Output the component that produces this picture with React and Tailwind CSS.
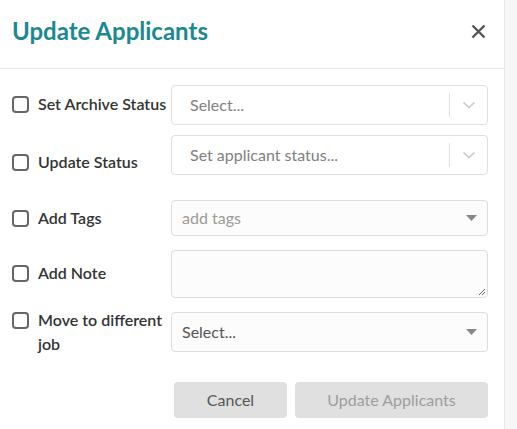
import React from "react";

const font = { fontFamily: "Lato, 'Open Sans', 'Liberation Sans', sans-serif" };

function Checkbox() {
  return <span className="inline-block w-[17px] h-[17px] shrink-0 rounded-[4px] border-2 border-[#666] bg-white" />;
}

function ReactSelect({ placeholder }) {
  return (
    <div className="h-[40px] w-full rounded-[4px] border border-[#e0e0e0] bg-white flex items-center">
      <span className="flex-1 pl-[18px] text-[16px] text-[#808080]">{placeholder}</span>
      <span className="w-px h-[24px] bg-[#e0e0e0]" />
      <span className="w-[37px] flex items-center justify-center">
        <svg width="14" height="8" viewBox="0 0 14 8" fill="none">
          <path d="M1.5 1.5 L7 6.5 L12.5 1.5" stroke="#c8c8c8" strokeWidth="1.6" />
        </svg>
      </span>
    </div>
  );
}

function NativeSelect({ placeholder, light, h }) {
  return (
    <div className={`${h} w-full rounded-[4px] border border-[#ddd] bg-[#fcfcfc] flex items-center`}>
      <span className={`flex-1 pl-[10px] text-[16px] ${light ? "text-[#9a9a9a]" : "text-[#555]"}`}>{placeholder}</span>
      <svg className="mr-[10px]" width="11" height="6" viewBox="0 0 11 6">
        <path d="M0 0 H11 L5.5 6 Z" fill="#888" />
      </svg>
    </div>
  );
}

function Label({ children, className = "" }) {
  return (
    <div className={`flex items-start gap-[9px] text-[16px] font-semibold text-[#333] leading-[24px] ${className}`}>
      <span className="mt-[3px]"><Checkbox /></span>
      <span>{children}</span>
    </div>
  );
}

export default function App() {
  return (
    <div className="flex w-[517px] h-[429px] bg-white" style={font}>
      <div className="w-[505px] h-full border-r border-[#e8e8e8] bg-white flex flex-col">
        <div className="h-[69px] border-b border-[#e8e8e8] flex items-center justify-between pl-[12px] pr-[18px] pb-[6px]">
          <h1 className="text-[24px] font-bold text-[#1b8892]">Update Applicants</h1>
          <svg width="15" height="15" viewBox="0 0 15 15">
            <path d="M1.5 1.5 L13.5 13.5 M13.5 1.5 L1.5 13.5" stroke="#555" strokeWidth="2.4" />
          </svg>
        </div>
        <div className="pl-[12px] pr-[16px] pt-[16px] flex flex-col">
          <div className="flex items-center h-[40px]">
            <Label className="w-[159px]">Set Archive Status</Label>
            <div className="flex-1"><ReactSelect placeholder="Select..." /></div>
          </div>
          <div className="flex items-end h-[40px] mt-[10px]">
            <Label className="w-[159px] mb-[-2px]">Update Status</Label>
            <div className="flex-1"><ReactSelect placeholder="Set applicant status..." /></div>
          </div>
          <div className="flex items-center h-[36px] mt-[25px]">
            <Label className="w-[159px] mt-[2px]">Add Tags</Label>
            <div className="flex-1"><NativeSelect placeholder="add tags" light h="h-[36px]" /></div>
          </div>
          <div className="flex items-center h-[48px] mt-[14px]">
            <Label className="w-[159px]">Add Note</Label>
            <div className="flex-1 relative">
              <div className="h-[48px] w-full rounded-[4px] border border-[#ddd] bg-[#fcfcfc]" />
              <svg className="absolute right-[2px] bottom-[2px]" width="8" height="8" viewBox="0 0 8 8">
                <path d="M7 1 L1 7 M7 4 L4 7" stroke="#666" strokeWidth="1" />
              </svg>
            </div>
          </div>
          <div className="flex items-center h-[40px] mt-[14px]">
            <Label className="w-[159px] mt-[0px]">Move to different job</Label>
            <div className="flex-1"><NativeSelect placeholder="Select..." h="h-[40px]" /></div>
          </div>
          <div className="flex justify-end gap-[8px] mt-[30px]">
            <button className="w-[113px] h-[36px] rounded-[4px] bg-[#e0e0e0] text-[16px] text-[#555]">Cancel</button>
            <button className="w-[193px] h-[36px] rounded-[4px] bg-[#e0e0e0] text-[16px] text-[#9d9d9d]">Update Applicants</button>
          </div>
        </div>
      </div>
      <div className="flex-1 bg-[#f7f7f7]" />
    </div>
  );
}
